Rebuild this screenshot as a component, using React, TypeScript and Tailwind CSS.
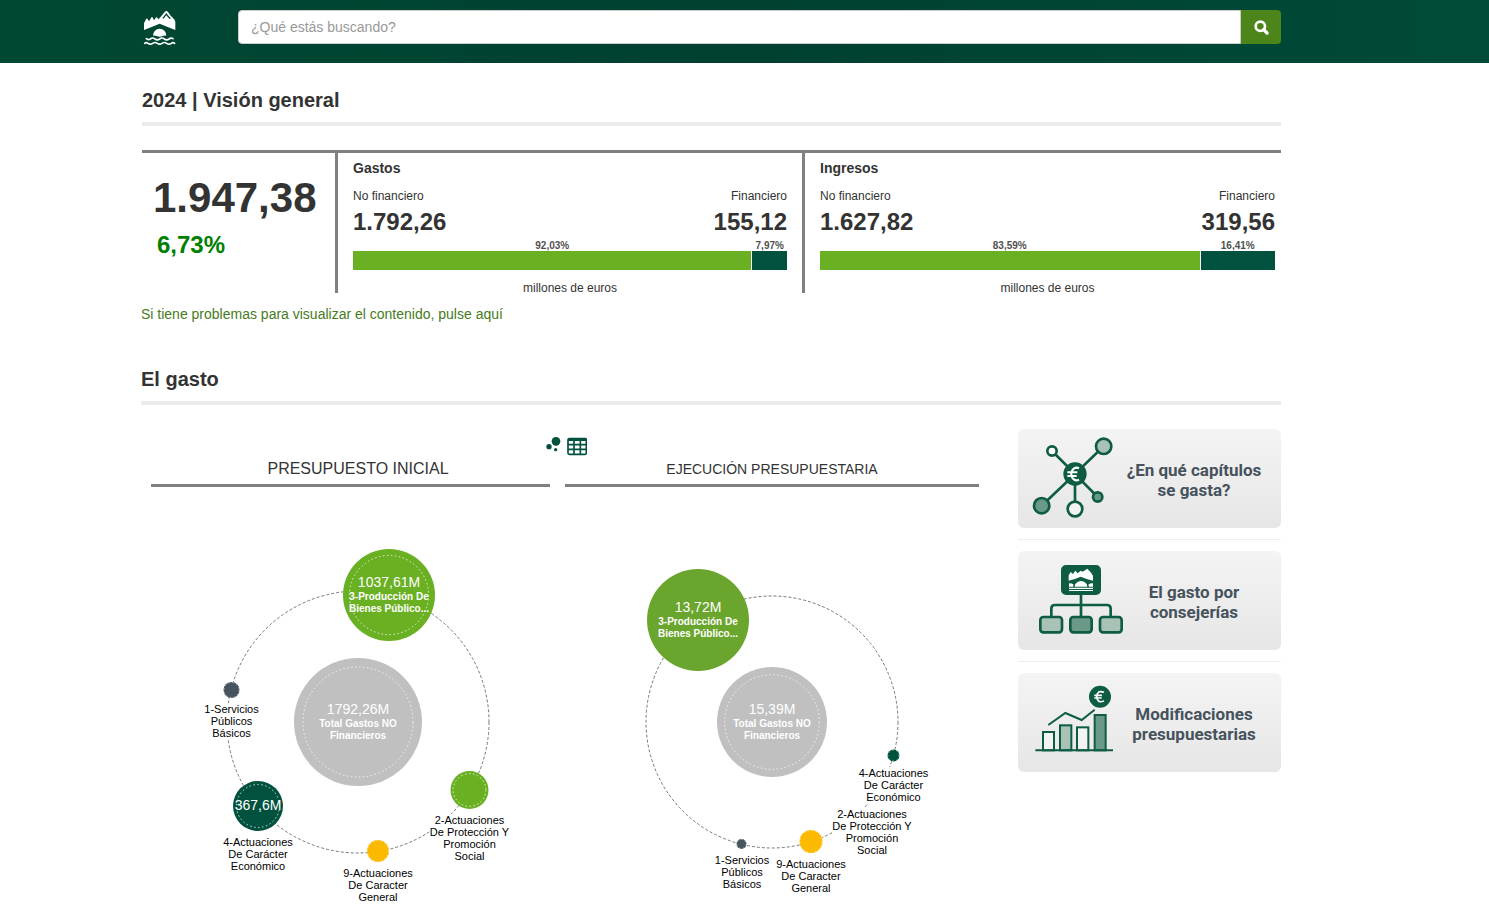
import type { ReactNode } from "react";

type Segment = { share: number; label: string; color: string };
type Summary = { title: string; left: string; right: string; segments: Segment[] };

const summaries: Summary[] = [
  {
    title: "Gastos",
    left: "1.792,26",
    right: "155,12",
    segments: [
      { share: 92.03, label: "92,03%", color: "bg-[#6ab023]" },
      { share: 7.97, label: "7,97%", color: "bg-[#00523f]" },
    ],
  },
  {
    title: "Ingresos",
    left: "1.627,82",
    right: "319,56",
    segments: [
      { share: 83.59, label: "83,59%", color: "bg-[#6ab023]" },
      { share: 16.41, label: "16,41%", color: "bg-[#00523f]" },
    ],
  },
];

type Bubble = { x: number; y: number; r: number; color: string; value?: string; valueY?: number; lines?: string[]; plain?: boolean };
type Label = { x: number; y: number; w: number; lines: string[] };
type Chart = { ring: number; bubbles: Bubble[]; labels: Label[] };

const initial: Chart = {
  ring: 131,
  bubbles: [
    { x: 0, y: 0, r: 64, color: "#c0c0c0", value: "1792,26M", valueY: -8, lines: ["Total Gastos NO", "Financieros"] },
    { x: 31, y: -127, r: 46, color: "#6ab023", value: "1037,61M", valueY: -135, lines: ["3-Producción De", "Bienes Público..."] },
    { x: -126.5, y: -32, r: 8, color: "#46545e" },
    { x: -100, y: 84, r: 25, color: "#00523f", value: "367,6M", valueY: 88 },
    { x: 20, y: 129, r: 11, color: "#fbba00" },
    { x: 111.5, y: 68, r: 19, color: "#6ab023" },
  ],
  labels: [
    { x: -126.5, y: -9, w: 58, lines: ["1-Servicios", "Públicos", "Básicos"] },
    { x: -100, y: 124, w: 72, lines: ["4-Actuaciones", "De Carácter", "Económico"] },
    { x: 20, y: 155, w: 72, lines: ["9-Actuaciones", "De Caracter", "General"] },
    { x: 111.5, y: 102, w: 80, lines: ["2-Actuaciones", "De Protección Y", "Promoción", "Social"] },
  ],
};

const executed: Chart = {
  ring: 126,
  bubbles: [
    { x: 0, y: 0, r: 55, color: "#c0c0c0", value: "15,39M", valueY: -8, lines: ["Total Gastos NO", "Financieros"] },
    { x: -74, y: -102, r: 51, color: "#6aa52d", value: "13,72M", valueY: -110, lines: ["3-Producción De", "Bienes Público..."], plain: true },
    { x: 121.5, y: 33.5, r: 6, color: "#00523f" },
    { x: 39, y: 119.5, r: 11.5, color: "#fbba00" },
    { x: -30.5, y: 122, r: 5, color: "#46545e" },
  ],
  labels: [
    { x: 121.5, y: 55, w: 72, lines: ["4-Actuaciones", "De Carácter", "Económico"] },
    { x: 100, y: 96, w: 80, lines: ["2-Actuaciones", "De Protección Y", "Promoción", "Social"] },
    { x: 39, y: 146, w: 72, lines: ["9-Actuaciones", "De Caracter", "General"] },
    { x: -30, y: 142, w: 58, lines: ["1-Servicios", "Públicos", "Básicos"] },
  ],
};

function OrbitChart({ chart, title }: { chart: Chart; title: string }) {
  return (
    <svg viewBox="-207 -235 414 418" className="block h-auto w-full" role="img" aria-label={title} textAnchor="middle">
      <circle r={chart.ring} fill="none" stroke="#777" strokeWidth="1" strokeDasharray="3 2" />
      {chart.labels.map((l) => (
        <g key={l.lines[0]} fontSize="11" fill="#000">
          <rect x={l.x - l.w / 2} y={l.y - 10} width={l.w} height={l.lines.length * 12} fill="#fff" />
          {l.lines.map((t, i) => (
            <text key={t} x={l.x} y={l.y + i * 12}>{t}</text>
          ))}
        </g>
      ))}
      {chart.bubbles.map((b) => (
        <g key={`${b.x}:${b.y}`} fill="#fff">
          <circle cx={b.x} cy={b.y} r={b.r} fill={b.color} />
          {!b.plain && (
            <circle
              cx={b.x}
              cy={b.y}
              r={b.r > 15 ? b.r * 0.86 : b.r - 0.5}
              fill="none"
              stroke="#fff"
              strokeWidth="1"
              strokeDasharray="1.5 2.5"
              opacity={b.r > 15 ? 0.8 : 0.5}
            />
          )}
          {b.value && <text x={b.x} y={b.valueY} fontSize="14">{b.value}</text>}
          {b.lines?.map((t, i) => (
            <text key={t} x={b.x} y={(b.valueY ?? 0) + 13 + i * 12} fontSize="10" fontWeight="700">{t}</text>
          ))}
        </g>
      ))}
    </svg>
  );
}

function BridgeMark() {
  return (
    <>
      <path d="M72 90V70L78 58Q81 52 84 59L87 64L93 54Q96 48 99 55L102 61L107 54Q110 49 113 55L116 58L134 36Q139 30 144 36L153 49Q157 50 159 55Q165 58 166 66V90Q141 80 119 71Q97 80 72 90Z" />
      <path d="M129 55L139 42L144 49L151 56" fill="none" stroke="#004735" strokeWidth="4" />
      <path d="M99 107a20 21 0 0 1 40 0q-6-2-10 1q-10 5-20 0q-4-3-10-1Z" />
      <path
        d="M79 116q6 5 12 1q7-6 14 0q7 5 14 0q7-6 14 0q7 5 14 0q6-5 12-1M74 130q5-4 10 0q7 5 14 0q7-5 14 0q7 5 14 0q7-5 14 0q7 5 14 0q5-4 10 0"
        fill="none"
        stroke="#fff"
        strokeWidth="5"
        strokeLinecap="round"
      />
    </>
  );
}

function NetworkIcon() {
  return (
    <svg viewBox="24 27 300 297" className="w-[100px] shrink-0" aria-hidden="true" stroke="#0d5c43" strokeWidth="8">
      <path d="M126 93L195 162L281 79M95 257L195 162L263 231M195 162V267" fill="none" />
      <circle cx="126" cy="93" r="14" fill="#fff" />
      <circle cx="281" cy="79" r="23" fill="#a8c3b6" />
      <circle cx="95" cy="257" r="23" fill="#6b9988" />
      <circle cx="195" cy="267" r="22" fill="#f3f3f3" />
      <circle cx="263" cy="231" r="14" fill="#6b9988" />
      <circle cx="195" cy="162" r="31" fill="#0d5c43" />
      <path d="M207 145a16 19 0 1 0 0 34M172 157h30M172 168h28" fill="none" stroke="#fff" strokeWidth="6" />
    </svg>
  );
}

function OrgIcon() {
  return (
    <svg viewBox="24 33 300 297" className="w-[100px] shrink-0 overflow-visible" aria-hidden="true" stroke="#0d5c43" strokeWidth="8">
      <path d="M213 160V230M124 232V206q0-11 11-11H291q11 0 11 11V232" fill="none" />
      <rect x="157" y="79" width="112" height="82" rx="11" fill="#0d5c43" />
      <g fill="#fff" stroke="none">
        <path d="M176 122V106l6-10 7 6 7-10 7 8 9-8 6 3 14-9 10 11 7 10v15q-18-4-37-12q-18 8-36 12Z" />
        <path d="M194 140a19 17 0 0 1 38 0ZM177 130q10 0 14 4l-2 6h-12ZM249 130q-10 0-14 4l2 6h12Z" />
        <path d="M177 143h72v4h-72ZM177 150h72v3h-72Z" />
      </g>
      <rect x="91" y="231" width="65" height="46" rx="9" fill="#a8c3b6" />
      <rect x="181" y="231" width="64" height="46" rx="9" fill="#6b9988" />
      <rect x="270" y="231" width="65" height="46" rx="9" fill="#a8c3b6" />
    </svg>
  );
}

function BarsIcon() {
  return (
    <svg viewBox="24 39 300 297" className="w-[100px] shrink-0" aria-hidden="true" stroke="#0d5c43" strokeWidth="6">
      <rect x="99" y="216" width="33" height="55" fill="#f3f3f3" />
      <rect x="150" y="196" width="34" height="75" fill="#a8c3b6" />
      <rect x="201" y="202" width="34" height="69" fill="#f3f3f3" />
      <rect x="254" y="165" width="33" height="106" fill="#6b9988" />
      <path d="M76 271H309" />
      <path d="M115 195L166 159L215 180L254 149" fill="none" />
      <circle cx="270" cy="110" r="30" fill="#0d5c43" />
      <path d="M282 97q-20-8-22 13q2 21 22 13M253 106h23M253 114h22" fill="none" stroke="#fff" strokeWidth="5" />
    </svg>
  );
}

function CardLink({ icon, lines }: { icon: ReactNode; lines: [string, string] }) {
  return (
    <a href="#" className="flex h-[99px] items-center overflow-hidden rounded-md bg-gradient-to-b from-[#f4f4f4] to-[#e6e6e6]">
      {icon}
      <span className="flex-1 pt-[3px] pr-[11px] text-center font-[Roboto,'Liberation_Sans',sans-serif] text-[17px] leading-5 font-bold whitespace-nowrap text-[#46525c]">
        {lines[0]}
        <br />
        {lines[1]}
      </span>
    </a>
  );
}

function SectionTitle({ children }: { children: ReactNode }) {
  return <h2 className="border-b-4 border-[#ebebeb] pb-2 text-[20px] leading-7 font-bold">{children}</h2>;
}

export default function App() {
  return (
    <div className="min-h-screen bg-white font-['Liberation_Sans',Arial,sans-serif] text-sm text-[#333]">
      <header className="flex h-[63px] items-start bg-gradient-to-r from-[#004834] via-[#004030] to-[#004b38] pr-[208px] pl-[142px]">
        <a href="#" aria-label="Inicio" className="mt-[10px] mr-[61px] shrink-0">
          <svg viewBox="66 30 105 111" className="h-[37px] w-[35px]" fill="#fff" aria-hidden="true">
            <BridgeMark />
          </svg>
        </a>
        <form className="mt-[10px] flex h-[34px] flex-1" role="search" onSubmit={(e) => e.preventDefault()}>
          <input
            type="search"
            aria-label="Buscar"
            placeholder="¿Qué estás buscando?"
            className="min-w-0 flex-1 rounded-l border border-[#ccc] bg-white px-3 text-sm placeholder:text-[#999]"
          />
          <button type="submit" aria-label="Buscar" className="flex w-10 items-center justify-center rounded-r bg-[#4c8519] text-white">
            <svg viewBox="0 0 45 45" width="15" height="15" fill="none" stroke="currentColor" aria-hidden="true">
              <circle cx="19" cy="19" r="14" strokeWidth="8" />
              <path d="M29 29L39 39" strokeWidth="10" strokeLinecap="round" />
            </svg>
          </button>
        </form>
      </header>

      <main className="pt-[23px] pr-[208px] pl-[141px]">
        <section className="pl-px">
          <SectionTitle>2024 | Visión general</SectionTitle>
          <div className="mt-6 grid grid-cols-[193fr_467fr_479fr] border-t-3 border-[#808080]">
            <div className="pt-[21px] pl-[11px] font-bold">
              <p className="text-[42px] leading-[48px]">1.947,38</p>
              <p className="mt-[9px] pl-1 text-2xl leading-7 text-[#008000]">6,73%</p>
            </div>
            {summaries.map((s) => (
              <div key={s.title} className="border-l-3 border-[#808080] pt-[5px] pr-[15px] pl-[15px] last:pr-[6px]">
                <h3 className="text-sm leading-5 font-bold">{s.title}</h3>
                <div className="mt-[10px] flex justify-between">
                  <div>
                    <p className="text-xs leading-4">No financiero</p>
                    <p className="mt-1 text-2xl leading-7 font-bold">{s.left}</p>
                  </div>
                  <div className="text-right">
                    <p className="text-xs leading-4">Financiero</p>
                    <p className="mt-1 text-2xl leading-7 font-bold">{s.right}</p>
                  </div>
                </div>
                <div className="mt-[5px] flex gap-px">
                  {s.segments.map((g) => (
                    <div key={g.label} className="min-w-0 basis-0" style={{ flexGrow: g.share }}>
                      <p className="text-center text-[10px] leading-[10px] font-bold whitespace-nowrap text-[#505050]">{g.label}</p>
                      <div className={`h-[19px] ${g.color}`} />
                    </div>
                  ))}
                </div>
                <p className="mt-[13px] text-center text-xs leading-[10px]">millones de euros</p>
              </div>
            ))}
          </div>
        </section>

        <a href="#" className="mt-[11px] inline-block leading-5 text-[#467b22]">
          Si tiene problemas para visualizar el contenido, pulse aquí
        </a>

        <section className="mt-[41px]">
          <SectionTitle>El gasto</SectionTitle>
          <div className="mt-6 flex items-start">
            <div className="min-w-0 flex-1 pt-2 pl-[10px]">
              <div className="flex h-5 items-start justify-center gap-[6px] pl-[2px]">
                <button type="button" aria-label="Ver gráfico">
                  <svg viewBox="48 36 45 57" width="15" height="19" fill="#00523f" aria-hidden="true">
                    <circle cx="78" cy="49" r="13" />
                    <circle cx="57" cy="65" r="8" />
                    <circle cx="77" cy="74" r="5" />
                  </svg>
                </button>
                <button type="button" aria-label="Ver tabla">
                  <svg viewBox="0 0 60 57" width="20" height="19" fill="none" stroke="#00523f" strokeWidth="5" aria-hidden="true">
                    <rect x="3" y="5" width="55" height="47" rx="4" />
                    <path d="M3 8H58" strokeWidth="8" />
                    <path d="M3 23H58M3 37H58M21 8V52M40 8V52" />
                  </svg>
                </button>
              </div>
              <div className="grid grid-cols-2">
                <div>
                  <h3 className="text-center text-base leading-6">PRESUPUESTO INICIAL</h3>
                  <div className="mt-[3px] mr-[15px] h-[3px] bg-[#808080]" />
                  <OrbitChart chart={initial} title="Presupuesto inicial" />
                </div>
                <div>
                  <h3 className="text-center text-sm leading-6">EJECUCIÓN PRESUPUESTARIA</h3>
                  <div className="mt-[3px] h-[3px] bg-[#808080]" />
                  <OrbitChart chart={executed} title="Ejecución presupuestaria" />
                </div>
              </div>
            </div>
            <aside className="ml-[39px] w-[263px] shrink-0">
              <CardLink icon={<NetworkIcon />} lines={["¿En qué capítulos", "se gasta?"]} />
              <hr className="my-[11px] border-t border-[#eee]" />
              <CardLink icon={<OrgIcon />} lines={["El gasto por", "consejerías"]} />
              <hr className="my-[11px] border-t border-[#eee]" />
              <CardLink icon={<BarsIcon />} lines={["Modificaciones", "presupuestarias"]} />
            </aside>
          </div>
        </section>
      </main>
    </div>
  );
}
